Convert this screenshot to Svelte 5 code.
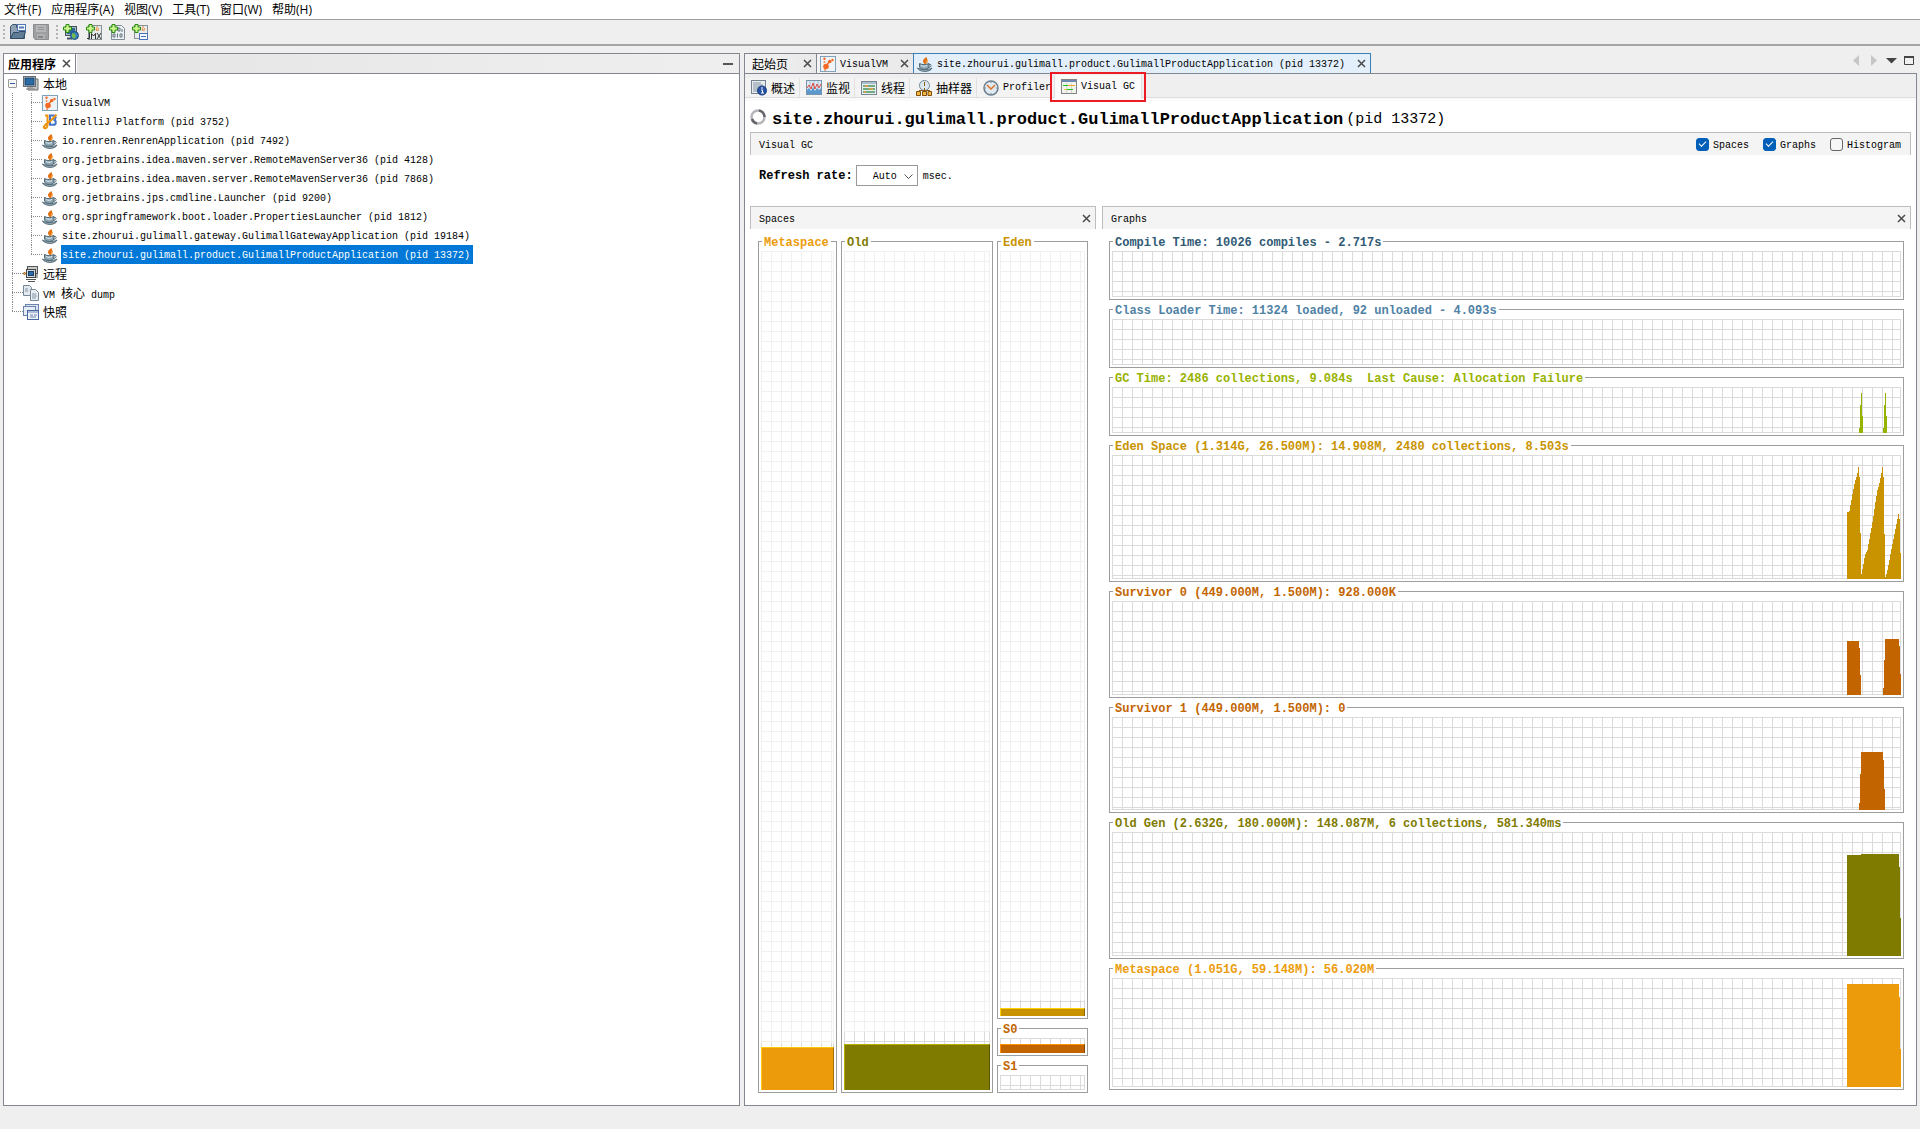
<script>
    const menus = ["文件(F)", "应用程序(A)", "视图(V)", "工具(T)", "窗口(W)", "帮助(H)"];

    const localApps = [
        { icon: "visualvm", name: "VisualVM" },
        { icon: "idea", name: "IntelliJ Platform (pid 3752)" },
        { icon: "java", name: "io.renren.RenrenApplication (pid 7492)" },
        { icon: "java", name: "org.jetbrains.idea.maven.server.RemoteMavenServer36 (pid 4128)" },
        { icon: "java", name: "org.jetbrains.idea.maven.server.RemoteMavenServer36 (pid 7868)" },
        { icon: "java", name: "org.jetbrains.jps.cmdline.Launcher (pid 9200)" },
        { icon: "java", name: "org.springframework.boot.loader.PropertiesLauncher (pid 1812)" },
        { icon: "java", name: "site.zhourui.gulimall.gateway.GulimallGatewayApplication (pid 19184)" },
        { icon: "java", name: "site.zhourui.gulimall.product.GulimallProductApplication (pid 13372)" },
    ];
    let selected = $state(8);

    const views = [
        { icon: "overview", name: "概述" },
        { icon: "monitor", name: "监视" },
        { icon: "threads", name: "线程" },
        { icon: "sampler", name: "抽样器" },
        { icon: "profiler", name: "Profiler", latin: true },
    ];

    let showSpaces = $state(true);
    let showGraphs = $state(true);
    let showHistogram = $state(false);
    let rate = $state("Auto");

    // used and committed are heights in pixels
    const metaspace = { name: "Metaspace", kind: "meta", used: 43, committed: 47 };
    const old = { name: "Old", kind: "old", used: 46, committed: 58 };
    const young = [
        { name: "Eden", kind: "eden", used: 8, committed: 16, size: 776 },
        { name: "S0", kind: "survivor", used: 9, committed: 28, size: 28 },
        { name: "S1", kind: "survivor", used: 0, committed: 28, size: 28 },
    ];

    // samples are [count, value] runs, one pixel per sample
    const gcPeak = [[1, 5], [1, 28], [1, 40], [1, 17]];
    const edenValues = [
        67, 67, 68, 74, 79, 85, 90, 95, 99, 102, 106, 112, 102, 46, 5, 10, 15, 21,
        25, 27, 29, 35, 40, 46, 51, 57, 63, 70, 77, 83, 89, 92, 96, 101, 106, 112,
        102, 45, 2, 5, 9, 14, 19, 25, 30, 35, 40, 45, 50, 55, 60, 65, 60, 26,
    ];

    const graphs = [
        { title: "Compile Time: 10026 compiles - 2.717s", color: "#315a75", size: 59, runs: [] },
        { title: "Class Loader Time: 11324 loaded, 92 unloaded - 4.093s", color: "#4f82a5", size: 59, runs: [] },
        {
            title: "GC Time: 2486 collections, 9.084s  Last Cause: Allocation Failure",
            color: "#98b200",
            size: 59,
            runs: [[12, 0], ...gcPeak, [20, 0], ...gcPeak, [14, 0]],
        },
        {
            title: "Eden Space (1.314G, 26.500M): 14.908M, 2480 collections, 8.503s",
            color: "#c99300",
            size: 137,
            runs: edenValues.map((v) => [1, v]),
        },
        {
            title: "Survivor 0 (449.000M, 1.500M): 928.000K",
            color: "#c26500",
            size: 106,
            runs: [[12, 54], [1, 47], [1, 20], [22, 0], [1, 7], [1, 35], [14, 56], [1, 49], [1, 21]],
        },
        {
            title: "Survivor 1 (449.000M, 1.500M): 0",
            color: "#c26500",
            size: 106,
            runs: [[12, 0], [1, 7], [1, 36], [22, 58], [1, 50], [1, 21], [16, 0]],
        },
        {
            title: "Old Gen (2.632G, 180.000M): 148.087M, 6 collections, 581.340ms",
            color: "#7f7b00",
            size: 137,
            runs: [[14, 101], [38, 102], [1, 89], [1, 38]],
        },
        {
            title: "Metaspace (1.051G, 59.148M): 56.020M",
            color: "#ec9c0b",
            size: 122,
            runs: [[52, 103], [1, 90], [1, 38]],
        },
    ];

    function area(runs) {
        let d = "M0 120";
        for (const [count, value] of runs) {
            d += `V${120 - value}h${count}`;
        }
        return d + "V120z";
    }
</script>

{#snippet plus()}
    <path d="M3 0.5h3v2.5h2.5v3H6v2.5H3V6H0.5V3H3z" fill="#c8f58c" stroke="#2b8a12" />
{/snippet}

{#snippet icon(name)}
    <svg class="icon" viewBox="0 0 16 16" width="16" height="16" aria-hidden="true">
        {#if name === "java"}
            <path d="M9 0c1 2-3 2.5-3 5 0 1.500 1 2 1.500 3h1.500C8 6 11 5 10 2.500 9.800 1.500 9 1 9 0z" fill="#e26f10" />
            <path d="M11 3.500c-2 1-2.500 2-1.500 4.500C11 6.500 10.500 5 11 3.500z" fill="#f09838" />
            <path d="M2.500 7.500c3 1.500 6 1.500 9.500 0v2.500c0 2-1.500 3.500-4.700 3.500S2.500 12 2.500 10z" fill="#8ea5b2" stroke="#4f6775" />
            <path d="M4 9.500c2 1 4 1 6 0" fill="none" stroke="#e4edf2" />
            <path d="M12 8.500c3-1 3 3-1 3" fill="none" stroke="#4f6775" />
            <path d="M0.500 12c2 4.500 13 4.500 14.500 0-3 2-11.500 2-14.500 0z" fill="#9db0bb" stroke="#4f6775" />
        {:else if name === "visualvm"}
            <rect x="0.500" y="0.500" width="15" height="15" fill="#f0f3f5" stroke="#7fa3bb" />
            <circle cx="6" cy="10.500" r="2.800" fill="#f26a26" />
            <path d="M6 10l3.500-4.500" stroke="#f26a26" stroke-width="1.500" />
            <circle cx="9.800" cy="5.500" r="1.800" fill="#f26a26" />
            <circle cx="12.500" cy="4" r="1.200" fill="#f26a26" />
            <circle cx="4.500" cy="2.800" r="1.200" fill="#f26a26" />
            <circle cx="4.500" cy="6" r="1" fill="#f58a50" />
            <circle cx="5" cy="14" r="1" fill="#f58a50" />
        {:else if name === "idea"}
            <path d="M8 1.500h3.500c3 0 2.500 4 0 4.300 3 .2 3 5 0 5H8z" fill="none" stroke="#4573c8" stroke-width="2" />
            <path d="M3 1.500h2.500v9c0 5-4.500 4.500-3.500 2 1-2.500 5-4 7.500-6.500L14.500 0.500" fill="none" stroke="#f0930c" stroke-width="2" />
        {:else if name === "local"}
            <path d="M11 3h4v11H5v-2" fill="#c5c8c8" stroke="#6b6f70" />
            <rect x="0.500" y="0.500" width="12" height="10" fill="#d9dcdc" stroke="#686d70" />
            <rect x="2" y="2" width="9" height="7" fill="#2a6ba3" stroke="#17446f" />
            <path d="M4 12h6M3 13h9" stroke="#888" />
        {:else if name === "remote"}
            <rect x="4.500" y="0.500" width="10" height="7" fill="#c8cccf" stroke="#555" />
            <rect x="3.500" y="3.500" width="9" height="8" fill="#d6d9db" stroke="#444" />
            <rect x="5.500" y="5.500" width="5" height="4" fill="#2d6ca8" stroke="#173f69" />
            <path d="M3 13.500h10M14 8v4M5 15.500h7" stroke="#555" />
            <circle cx="1.500" cy="7.500" r="1" fill="#f5b04d" stroke="#9c5c0c" />
        {:else if name === "dump"}
            <path d="M0.500 0.500h6l2 2v8h-8z" fill="#e3e9ef" stroke="#768896" />
            <path d="M2 4h3M2 6h3" stroke="#8296a6" />
            <path d="M7.500 4.500h5l3 3v8h-8z" fill="#e9eef3" stroke="#768896" />
            <path d="M9 9h4M9 11h5M9 13h4" stroke="#8296a6" />
        {:else if name === "snapshot"}
            <rect x="2.500" y="0.500" width="13" height="9" fill="#dce5f2" stroke="#6b82ae" />
            <rect x="0.500" y="2.500" width="12" height="9" fill="#e6edf6" stroke="#6b82ae" />
            <rect x="4.500" y="6.500" width="11" height="9" fill="#f0f4fa" stroke="#4667a0" />
            <path d="M5 8h10M7 11h3M11 11h3M7 13h6" stroke="#6b82ae" />
        {:else if name === "open"}
            <path d="M0.500 14.500v-12l2-2h4v3h8v11z" fill="#8fa3b5" stroke="#3b566e" />
            <rect x="7.500" y="0.500" width="8" height="6" fill="#f5f8fc" stroke="#5478b4" />
            <path d="M9 3.500h5" stroke="#5478b4" stroke-width="2" />
            <path d="M0.500 14.500l3-6h5l1-1h6l-2 7z" fill="#5f7d96" stroke="#304a61" />
        {:else if name === "save"}
            <path d="M0.500 0.500h15v15H2l-1.500-2z" fill="#9d9fa0" stroke="#8b8d8f" />
            <rect x="3" y="1" width="10" height="7" fill="#b4b6b7" />
            <path d="M5 3.500h6M5 5.500h6" stroke="#92969a" />
            <rect x="4" y="10" width="8" height="5" fill="#aeb0b1" />
            <path d="M5 13h5" stroke="#85888a" stroke-width="2" />
        {:else if name === "add-host"}
            <rect x="2.500" y="2.500" width="11" height="9" fill="#aeb9c0" stroke="#40535e" />
            <rect x="4" y="4" width="8" height="6" fill="#2d689b" />
            <path d="M4 14.500h5" stroke="#40535e" stroke-width="2" />
            <circle cx="11.500" cy="11.500" r="4" fill="#357eb8" stroke="#1d4e7c" />
            <path d="M9 9l3 1 1 2-2 3-2-2z" fill="#72ba4d" />
            {@render plus()}
        {:else if name === "add-jmx"}
            <rect x="2.500" y="1.500" width="13" height="14" fill="#e5e8e9" stroke="#8b9296" />
            <path d="M11 2c1 2-2 2 0 5M13 4c-1 1-1 1-1 3" fill="none" stroke="#ea7d20" />
            <path d="M1 14.500h2.500V9M5.500 15V9.500l2 2.500 2-2.500V15M11 9l4 6M15 9l-4 6" fill="none" stroke="#333" />
            {@render plus()}
        {:else if name === "add-core"}
            <path d="M2.500 1.500h10l3 3v11h-13z" fill="#eef1f3" stroke="#7c8b95" />
            <path d="M9 4h2v3H9zM13 5v3M4 10h2v3H4zM8.500 9.500v4M11 10h2v3h-2z" fill="none" stroke="#60727e" />
            {@render plus()}
        {:else if name === "add-snapshot"}
            <rect x="2.500" y="1.500" width="13" height="13" fill="#e8ecee" stroke="#8b9296" />
            <path d="M11 2c1 2-2 2 0 5M13 4c-1 1-1 1-1 3" fill="none" stroke="#ea7d20" />
            <rect x="7.500" y="9.500" width="8" height="6" fill="#f5f8fc" stroke="#4a70b5" />
            <path d="M9 12.500h5" stroke="#4a70b5" />
            {@render plus()}
        {:else if name === "overview"}
            <rect x="0.500" y="0.500" width="14" height="13" fill="#e8ecee" stroke="#73828c" />
            <path d="M2 3h8M2 5h10M2 7h6M2 9h4M2 11h5" stroke="#8093a1" />
            <circle cx="11" cy="10.500" r="4.500" fill="#2854a6" stroke="#17397c" />
            <path d="M11 7v2M10 10h1.500v3M10 13h3" fill="none" stroke="#fff" />
        {:else if name === "monitor"}
            <rect x="0.500" y="0.500" width="15" height="14" fill="#dce9f4" stroke="#7795ac" />
            <path d="M4 1v8M8 1v8M12 1v8" stroke="#a9c2d6" />
            <path d="M1 14V10l2-2 2 3 2-4 2 4 2-3 2 2 2-2v6z" fill="#5c98ce" />
            <path d="M1 8l2-3 2 4 2-6 2 6 2-5 2 4 2-4" fill="none" stroke="#df4d43" />
        {:else if name === "threads"}
            <rect x="0.500" y="1.500" width="15" height="13" fill="#eaf0f2" stroke="#768790" />
            <rect x="1" y="2" width="14" height="2" fill="#aabfce" />
            <path d="M2 6h12M2 9h12M2 12h12" stroke="#46945e" stroke-width="1.500" />
            <path d="M4 6h3M8 9h4M3 12h2" stroke="#eca13b" stroke-width="1.500" />
        {:else if name === "sampler"}
            <circle cx="8.500" cy="5.500" r="5" fill="#dce9f1" stroke="#708592" />
            <path d="M8.500 2v4M8.500 8v3M3 10.500h11" fill="none" stroke="#895c19" />
            <path d="M0.500 11.500h4v4h-4zM6.500 11.500h4v4h-4zM12 11.500h3.500v4H12z" fill="#f4b63f" stroke="#805009" />
        {:else if name === "profiler"}
            <circle cx="8" cy="8" r="7" fill="#dfe9f1" stroke="#6b7f8d" stroke-width="1.500" />
            <path d="M8 2v1M8 13v1M2 8h1M13 8h1" stroke="#6f8392" />
            <path d="M4 5l4 4 4-4" fill="none" stroke="#de6f25" stroke-width="1.500" />
        {:else if name === "visualgc"}
            <rect x="0.500" y="0.500" width="15" height="14" fill="#f2f2ef" stroke="#848484" />
            <path d="M1 2h14" stroke="#6e87b0" stroke-width="2" />
            <path d="M5.500 4v10M10.500 4v10" stroke="#d6d6d2" />
            <path d="M2 6.500h5" stroke="#19c819" />
            <path d="M7 6.500h7" stroke="#f1aa21" />
            <path d="M3 10.500h3" stroke="#e8c52a" />
            <path d="M6 10.500h6" stroke="#19c819" />
        {/if}
    </svg>
{/snippet}

{#snippet cross()}
    <svg class="cross" viewBox="0 0 9 9" width="9" height="9" aria-hidden="true">
        <path d="M1 1l7 7M8 1l-7 7" stroke="#4a4a4a" stroke-width="1.500" />
    </svg>
{/snippet}

{#snippet space(s)}
    <section class="plot" style:flex-grow={s.size} style:flex-basis={s.size ? `${s.size}px` : null}>
        <h3 class={s.kind}>{s.name}</h3>
        <div class="grid pale">
            <div class="grid committed" style:clip-path="inset(calc(100% - {s.committed}px) 0 0 0)"></div>
            {#if s.used}
                <div class="used {s.kind}" style:height="{s.used}px"></div>
            {/if}
        </div>
    </section>
{/snippet}

<div class="app">
    <nav class="menubar">
        {#each menus as menu}
            <button>{menu}</button>
        {/each}
    </nav>

    <div class="toolbar">
        <span class="grip"></span>
        <button aria-label="Load">{@render icon("open")}</button>
        <button aria-label="Save" disabled>{@render icon("save")}</button>
        <span class="grip"></span>
        <button aria-label="Add remote host">{@render icon("add-host")}</button>
        <button aria-label="Add JMX connection">{@render icon("add-jmx")}</button>
        <button aria-label="Add core dump">{@render icon("add-core")}</button>
        <button aria-label="Add snapshot">{@render icon("add-snapshot")}</button>
    </div>

    <main>
        <aside class="window">
            <div class="strip">
                <div class="tab strong">
                    <span class="cjk">应用程序</span>
                    <button aria-label="Close">{@render cross()}</button>
                </div>
                <div class="fill">
                    <button class="minimize" aria-label="Minimize"></button>
                </div>
            </div>

            <ul class="tree">
                <li>
                    <button class="expander" aria-label="Collapse"></button>
                    {@render icon("local")}
                    <span class="cjk node">本地</span>
                </li>
                {#each localApps as app, i}
                    <li>
                        <span class="guide trunk"></span>
                        <span class="guide branch" class:last={i === localApps.length - 1}></span>
                        {@render icon(app.icon)}
                        <button class="node" class:selected={selected === i} onclick={() => (selected = i)}>{app.name}</button>
                    </li>
                {/each}
                <li><span class="guide branch"></span>{@render icon("remote")}<span class="cjk node">远程</span></li>
                <li><span class="guide branch"></span>{@render icon("dump")}<span class="node">VM <span class="cjk">核心</span> dump</span></li>
                <li><span class="guide branch last"></span>{@render icon("snapshot")}<span class="cjk node">快照</span></li>
            </ul>
        </aside>

        <section class="editor">
            <div class="tabs">
                <div class="tab start">
                    <span class="cjk">起始页</span>
                    <button aria-label="Close">{@render cross()}</button>
                </div>
                <div class="tab">
                    {@render icon("visualvm")}
                    <span class="label">VisualVM</span>
                    <button aria-label="Close">{@render cross()}</button>
                </div>
                <div class="tab active">
                    {@render icon("java")}
                    <span class="label">site.zhourui.gulimall.product.GulimallProductApplication (pid 13372)</span>
                    <button aria-label="Close">{@render cross()}</button>
                </div>
                <div class="controls">
                    <svg viewBox="0 0 62 11" width="62" height="11" aria-hidden="true">
                        <path d="M6 0v11L0 5.500zM18 0v11l6-5.500z" fill="#c6c6c6" />
                        <path d="M33 3h11l-5.500 5.500z" fill="#444" />
                        <path d="M51.500 2v7.500h9V2" fill="none" stroke="#444" />
                        <path d="M51 2h10" stroke="#444" stroke-width="2" />
                    </svg>
                </div>
            </div>

            <div class="document">
                <div class="views">
                    {#each views as view}
                        <button class="view" class:cjk={!view.latin} class:latin={view.latin}>{@render icon(view.icon)}{view.name}</button>
                    {/each}
                    <button class="view current">{@render icon("visualgc")}Visual GC<span class="marker"></span></button>
                </div>

                <div class="content">
                    <h1>
                        <svg viewBox="0 0 16 16" width="16" height="16" aria-hidden="true">
                            <circle cx="8" cy="8" r="6.500" fill="none" stroke="#b5b5ba" stroke-width="2.500" />
                            <path d="M9 1.500a6.500 6.500 0 0 1 5.500 6.500M2 10a6.500 6.500 0 0 0 5 4.400" fill="none" stroke="#65656b" stroke-width="2.500" />
                        </svg>
                        <b>site.zhourui.gulimall.product.GulimallProductApplication</b>
                        <span>(pid 13372)</span>
                    </h1>

                    <div class="header">
                        <h2>Visual GC</h2>
                        <div class="checks">
                            <label><input type="checkbox" bind:checked={showSpaces} /><span class="label">Spaces</span></label>
                            <label><input type="checkbox" bind:checked={showGraphs} /><span class="label">Graphs</span></label>
                            <label><input type="checkbox" bind:checked={showHistogram} /><span class="label">Histogram</span></label>
                        </div>
                    </div>

                    <div class="refresh">
                        <label for="rate">Refresh rate:</label>
                        <div class="select">
                            <select id="rate" bind:value={rate}>
                                <option>Auto</option>
                                <option>100</option>
                                <option>200</option>
                                <option>500</option>
                                <option>1000</option>
                            </select>
                            <svg viewBox="0 0 9 6" width="9" height="6" aria-hidden="true">
                                <path d="M0.500 0.500l4 4 4-4" fill="none" stroke="#555" />
                            </svg>
                        </div>
                        <span class="label">msec.</span>
                    </div>

                    <div class="panels">
                        {#if showSpaces}
                            <section class="panel">
                                <div class="header">
                                    <h2>Spaces</h2>
                                    <button aria-label="Close">{@render cross()}</button>
                                </div>
                                <div class="spaces">
                                    <div class="column meta-column">{@render space(metaspace)}</div>
                                    <div class="column old-column">{@render space(old)}</div>
                                    <div class="column young-column">
                                        {#each young as s}
                                            {@render space(s)}
                                        {/each}
                                    </div>
                                </div>
                            </section>
                        {/if}
                        {#if showGraphs}
                            <section class="panel">
                                <div class="header">
                                    <h2>Graphs</h2>
                                    <button aria-label="Close">{@render cross()}</button>
                                </div>
                                <div class="graphs">
                                    {#each graphs as g}
                                        <section class="plot" style:flex-grow={g.size} style:flex-basis="{g.size}px">
                                            <h3 style:color={g.color}>{g.title}</h3>
                                            <div class="grid">
                                                {#if g.runs.length}
                                                    <svg class="series" viewBox="0 0 54 120" width="54" height="120" shape-rendering="crispEdges" aria-hidden="true">
                                                        <path d={area(g.runs)} fill={g.color} />
                                                    </svg>
                                                {/if}
                                            </div>
                                        </section>
                                    {/each}
                                </div>
                            </section>
                        {/if}
                    </div>
                </div>
            </div>
        </section>
    </main>
    <footer></footer>
</div>

<style>
    :global(body) {
        margin: 0;
        background: #efefef;
    }

    .app,
    .app * {
        box-sizing: border-box;
    }

    .app {
        min-height: 100vh;
        display: flex;
        flex-direction: column;
        font: 10px/13px "Liberation Mono", "Noto Sans CJK SC", monospace;
        color: #000;
        background: #efefef;
    }

    button {
        padding: 0;
        border: 0;
        background: none;
        font: inherit;
        color: inherit;
        display: flex;
        align-items: center;
    }

    h1,
    h2,
    h3,
    ul {
        margin: 0;
        padding: 0;
        font: inherit;
        list-style: none;
    }

    svg {
        display: block;
        flex: none;
    }

    .cjk {
        font-family: "Noto Sans CJK SC", sans-serif;
        font-size: 12px;
    }

    .label,
    h2 {
        padding-top: 2px;
    }

    .menubar {
        display: flex;
        gap: 10px;
        height: 20px;
        padding: 0 4px;
        background: #fff;
        border-bottom: 1px solid #a0a0a0;
        font-family: "Open Sans", "Noto Sans CJK SC", sans-serif;
        font-size: 12px;
    }

    .toolbar {
        display: flex;
        align-items: center;
        gap: 7px;
        height: 26px;
        padding: 0 3px;
        border-bottom: 2px solid #a5a5a5;
    }

    .grip {
        width: 2px;
        height: 15px;
        margin-right: -2px;
        background: repeating-linear-gradient(#b4b4b4 0 2px, transparent 2px 4px);
    }

    main {
        flex: 1;
        display: grid;
        grid-template-columns: minmax(0, 737fr) minmax(0, 1173fr);
        gap: 4px;
        padding: 7px 3px 0;
    }

    footer {
        height: 23px;
    }

    .window {
        background: #fff;
        border: 1px solid #828790;
    }

    .strip {
        display: flex;
        height: 20px;
        border-bottom: 1px solid #828790;
    }

    .strip .tab {
        display: flex;
        align-items: center;
        gap: 6px;
        padding: 0 4px;
        border-right: 1px solid #828790;
    }

    .strong {
        font-weight: bold;
    }

    .fill {
        flex: 1;
        display: flex;
        align-items: center;
        justify-content: flex-end;
        padding-right: 6px;
        margin-left: 1px;
        background: linear-gradient(90deg, #e5e5e5, #efefef);
    }

    .minimize {
        width: 10px;
        height: 2px;
        background: #555;
    }

    .tree {
        padding-left: 8px;
    }

    .tree li {
        display: flex;
        height: 19px;
        align-items: center;
    }

    .expander {
        width: 9px;
        height: 9px;
        margin: 0 6px 0 -4px;
        border: 1px solid #9a9a9a;
        border-radius: 1px;
        background: linear-gradient(#3a5ca8, #3a5ca8) center / 5px 1px no-repeat #f7f7f7;
    }

    .guide {
        height: 19px;
        background:
            repeating-linear-gradient(#8a8a8a 0 1px, transparent 1px 2px) 0 0 / 1px 100% no-repeat,
            repeating-linear-gradient(90deg, #8a8a8a 0 1px, transparent 1px 2px) 0 9px / 100% 1px no-repeat;
    }

    .trunk {
        width: 19px;
        background-size: 1px 100%, 0 0;
    }

    .branch {
        width: 11px;
    }

    .branch.last {
        background-size: 1px 10px, 100% 1px;
    }

    .node {
        height: 19px;
        padding: 0 3px 0 1px;
        margin-left: 3px;
        line-height: 19px;
        white-space: pre;
    }

    button.node {
        padding-top: 2px;
    }

    .node.selected {
        background: #0078d7;
        color: #fff;
    }

    .editor {
        display: flex;
        flex-direction: column;
        min-width: 0;
    }

    .tabs {
        display: flex;
        height: 20px;
    }

    .tabs .tab {
        display: flex;
        align-items: center;
        gap: 4px;
        padding: 0 4px 0 3px;
        border: 1px solid #828790;
        border-width: 1px 0 0 1px;
        background: linear-gradient(90deg, #f3f3f3, #e9e9e9);
        white-space: nowrap;
    }

    .tabs .tab button {
        margin-left: 8px;
    }

    .tabs .start {
        gap: 7px;
        padding-left: 7px;
    }

    .tabs .active {
        border-color: #3a80b5;
        border-right-width: 1px;
        background: #e3effb;
    }

    .controls {
        flex: 1;
        display: flex;
        justify-content: flex-end;
        padding: 2px 2px 0 0;
    }

    .document {
        flex: 1;
        display: flex;
        flex-direction: column;
        border: 1px solid #828790;
        background: #fff;
    }

    .views {
        display: flex;
        height: 27px;
        padding-top: 4px;
        background: linear-gradient(#efefef 23px, #dedede 23px 24px, #fafafa 24px);
    }

    .view {
        height: 19px;
        gap: 4px;
        padding: 0 4px 0 6px;
        border-right: 1px solid #e0e0e0;
        background: #f3f3f3;
    }

    .view.latin {
        border-right: 0;
        padding-right: 3px;
    }

    .view.current {
        position: relative;
        height: 23px;
        margin-top: -3px;
        padding: 0 6px;
        border-left: 1px solid #e0e0e0;
        background: #fafafa;
    }

    /* red frame around the current view */
    .marker {
        position: absolute;
        inset: -3px -5px -4px;
        border: 2px solid #ed1c24;
    }

    .content {
        flex: 1;
        display: flex;
        flex-direction: column;
        padding: 0 5px;
    }

    h1 {
        display: flex;
        align-items: center;
        height: 31px;
        padding-top: 6px;
        font-size: 15px;
        line-height: 20px;
        white-space: nowrap;
    }

    h1 svg {
        margin-bottom: 6px;
    }

    h1 b {
        margin-left: 6px;
        margin-right: 3px;
        font-size: 17px;
    }

    .header {
        display: flex;
        align-items: center;
        justify-content: space-between;
        height: 23px;
        padding: 0 4px 0 8px;
        border: 1px solid #bdbdbd;
        border-bottom: 0;
        background: #f4f4f4;
    }

    .checks {
        display: flex;
        gap: 14px;
        padding-right: 5px;
    }

    .checks label {
        display: flex;
        align-items: center;
        gap: 4px;
    }

    input {
        appearance: none;
        width: 13px;
        height: 13px;
        margin: 0;
        border: 1px solid #666;
        border-radius: 3px;
        background: #f7f7f7;
        display: grid;
        place-items: center;
    }

    input:checked {
        border-color: #005fb8;
        background: #005fb8;
    }

    input:checked::after {
        content: "";
        width: 6px;
        height: 3px;
        margin-bottom: 2px;
        border: 1px solid #fff;
        border-width: 0 0 1px 1px;
        transform: rotate(-45deg);
    }

    .refresh {
        display: flex;
        align-items: center;
        height: 51px;
        padding: 0 9px 10px;
    }

    .refresh label {
        padding-top: 2px;
        font-size: 12px;
        font-weight: bold;
        margin-right: 3px;
    }

    .select {
        position: relative;
        margin-right: 5px;
    }

    select {
        appearance: none;
        display: block;
        width: 62px;
        height: 21px;
        padding: 2px 0 0 16px;
        border: 1px solid #999;
        border-radius: 0;
        background: #fff;
        font: inherit;
        color: #000;
    }

    .select svg {
        position: absolute;
        right: 5px;
        top: 9px;
        pointer-events: none;
    }

    .panels {
        flex: 1;
        display: grid;
        grid-template-columns: minmax(0, 346fr) minmax(0, 809fr);
        gap: 6px;
    }

    .panel {
        display: flex;
        flex-direction: column;
    }

    .spaces {
        flex: 1;
        display: flex;
        gap: 4px;
        padding: 12px 8px;
    }

    .column {
        display: flex;
        flex-direction: column;
        gap: 9px;
        min-width: 0;
    }

    .meta-column {
        flex: 79 1 0;
    }

    .old-column {
        flex: 152 1 0;
    }

    .young-column {
        flex: 91 1 0;
    }

    .graphs {
        flex: 1;
        display: flex;
        flex-direction: column;
        gap: 9px;
        padding: 12px 7px 15px;
    }

    .plot {
        flex: 1 1 auto;
        display: flex;
        flex-direction: column;
        padding: 0 2px 2px;
        border: 1px solid #9d9d9d;
    }

    h3 {
        align-self: flex-start;
        height: 13px;
        margin: -5px 0 1px 1px;
        padding: 0 2px;
        background: #fff;
        font-size: 12px;
        font-weight: bold;
        white-space: pre;
    }

    h3.meta {
        color: #ec9c0b;
    }

    h3.old {
        color: #7f7b00;
    }

    h3.eden {
        color: #c99300;
    }

    h3.survivor {
        color: #c26500;
    }

    .grid {
        --line: #dbdbdb;
        flex: 1;
        display: grid;
        justify-items: end;
        align-items: end;
        background:
            linear-gradient(var(--line), var(--line)) right / 1px 100% no-repeat,
            linear-gradient(var(--line), var(--line)) bottom / 100% 1px no-repeat,
            linear-gradient(var(--line) 1px, transparent 1px) 0 0 / 10px 10px,
            linear-gradient(90deg, var(--line) 1px, transparent 1px) 0 0 / 10px 10px;
    }

    .grid.pale {
        --line: #f0f0f0;
    }

    .grid > * {
        grid-area: 1 / 1;
    }

    .committed {
        place-self: stretch;
    }

    .series {
        margin-top: -120px;
    }

    .used {
        z-index: 1;
        width: 100%;
        border: 1px solid;
        border-bottom: 0;
    }

    .used.meta {
        background: #ec9c0b;
        border-color: #ffc810 #a56d07 #ffc810 #ffc810;
    }

    .used.old {
        background: #7f7b00;
        border-color: #b5af00 #595600 #b5af00 #b5af00;
    }

    .used.eden {
        background: #c99300;
        border-color: #ffd000 #8d6700 #ffd000 #ffd000;
    }

    .used.survivor {
        background: #c26500;
        border-color: #ff9000 #884700 #ff9000 #ff9000;
    }
</style>
